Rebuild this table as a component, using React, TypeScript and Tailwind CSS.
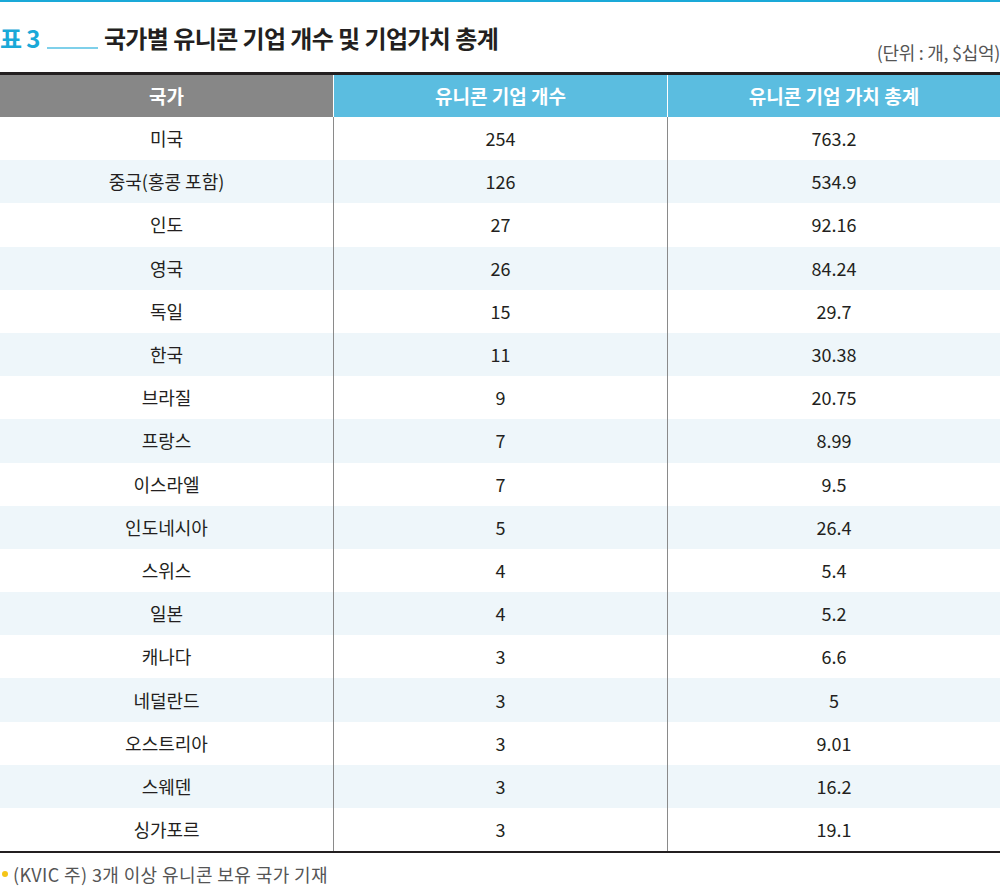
const rows: [string, string, string][] = [
  ["미국", "254", "763.2"],
  ["중국(홍콩 포함)", "126", "534.9"],
  ["인도", "27", "92.16"],
  ["영국", "26", "84.24"],
  ["독일", "15", "29.7"],
  ["한국", "11", "30.38"],
  ["브라질", "9", "20.75"],
  ["프랑스", "7", "8.99"],
  ["이스라엘", "7", "9.5"],
  ["인도네시아", "5", "26.4"],
  ["스위스", "4", "5.4"],
  ["일본", "4", "5.2"],
  ["캐나다", "3", "6.6"],
  ["네덜란드", "3", "5"],
  ["오스트리아", "3", "9.01"],
  ["스웨덴", "3", "16.2"],
  ["싱가포르", "3", "19.1"],
];

export default function App() {
  return (
    <div
      className="w-[1000px] h-[887px] bg-white text-[#231f20] overflow-hidden"
      style={{ fontFamily: '"Noto Sans CJK KR", "Noto Sans", sans-serif' }}
    >
      <div className="h-[2px] bg-[#1aa9d8]" />

      {/* title */}
      <div className="h-[70px] flex justify-between">
        <div className="flex items-end mt-[22px] h-[26px]">
          <span className="text-[24px] font-bold text-[#1aa9d8] leading-none tracking-tight">표 3</span>
          <span className="w-[51px] h-[2px] bg-[#7fd0ea] ml-[7px] mr-[6px] mb-[1px]" />
          <span className="text-[24px] font-bold leading-none tracking-[-0.6px]">
            국가별 유니콘 기업 개수 및 기업가치 총계
          </span>
        </div>
        <span className="self-end text-[18px] text-[#555] leading-none mb-[11px] tracking-[-0.3px]">
          (단위 : 개, $십억)
        </span>
      </div>

      {/* table */}
      <div className="border-t-[3px] border-[#231f20]">
        <div className="grid grid-cols-[333px_334px_333px] h-[42px] text-white text-[19px] font-bold">
          <div className="bg-[#878787] flex items-center justify-center">국가</div>
          <div className="bg-[#5bbde0] flex items-center justify-center border-l border-white">유니콘 기업 개수</div>
          <div className="bg-[#5bbde0] flex items-center justify-center border-l border-white">유니콘 기업 가치 총계</div>
        </div>
        {rows.map((r, i) => (
          <div
            key={i}
            className={`grid grid-cols-[333px_334px_333px] h-[43.2px] text-[18px] ${i % 2 === 1 ? "bg-[#eef6fa]" : "bg-white"}`}
          >
            <div className="flex items-center justify-center">{r[0]}</div>
            <div className="flex items-center justify-center border-l border-[#8a8a8a]">{r[1]}</div>
            <div className="flex items-center justify-center border-l border-[#8a8a8a]">{r[2]}</div>
          </div>
        ))}
        <div className="h-[2px] bg-[#231f20]" />
      </div>

      {/* footnote */}
      <div className="flex items-center mt-[12px] ml-[2px] text-[18px] text-[#555] leading-none tracking-[0.4px]">
        <span className="w-[6px] h-[6px] rounded-full bg-[#f5c518] mr-[5px]" />
        (KVIC 주) 3개 이상 유니콘 보유 국가 기재
      </div>
    </div>
  );
}
